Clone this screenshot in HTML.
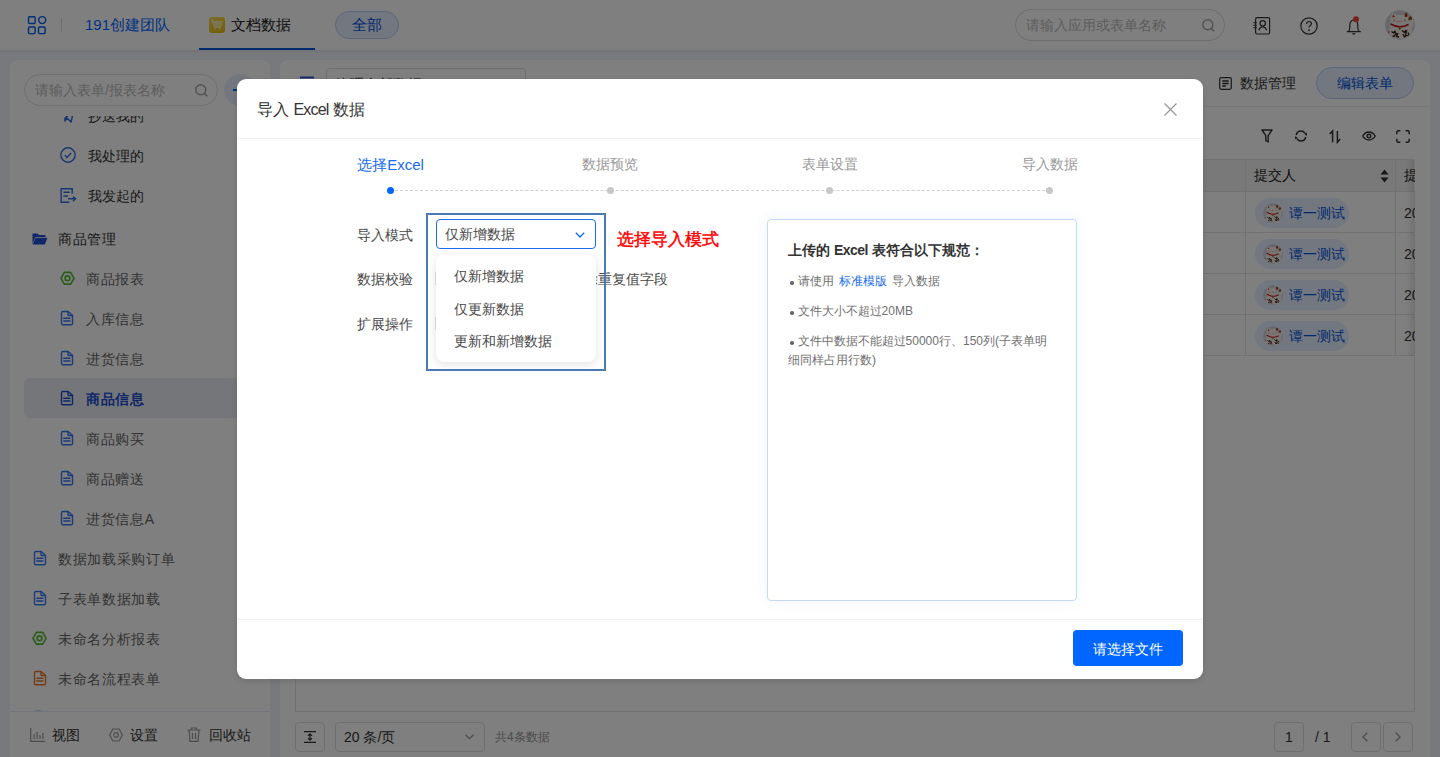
<!DOCTYPE html>
<html><head><meta charset="utf-8">
<style>
*{box-sizing:border-box;margin:0;padding:0}
html,body{width:1440px;height:757px;overflow:hidden}
body{position:relative;background:#eef2f8;font-family:"Liberation Sans",sans-serif;color:#333;font-size:14px}
.a{position:absolute}
.t{position:absolute;white-space:nowrap;line-height:20px;height:20px}
svg{position:absolute;overflow:visible}
#hdr{left:0;top:0;width:1440px;height:50px;background:#fff;box-shadow:0 1px 3px rgba(0,0,0,.06);z-index:1}
#side{left:10px;top:60px;width:260px;height:697px;background:#fff;border-radius:8px 8px 0 0;overflow:hidden}
#cont{left:280px;top:60px;width:1150px;height:697px;background:#fff;border-radius:8px 8px 0 0;overflow:hidden}
#mask{left:0;top:0;width:1440px;height:757px;background:rgba(0,0,0,.5);z-index:5}
#modal{left:237px;top:79px;width:966px;height:600px;background:#fff;border-radius:9px;overflow:hidden;z-index:6;box-shadow:0 2px 6px rgba(0,0,0,.12)}
</style></head><body>

<!-- HEADER -->
<div id="hdr" class="a">
  <svg style="left:27px;top:15px" width="20" height="20" viewBox="0 0 20 20">
    <rect x="1.5" y="1.8" width="6.6" height="6.6" rx="1" fill="none" stroke="#0060f0" stroke-width="1.45"/>
    <circle cx="15.2" cy="5.1" r="3.5" fill="none" stroke="#0060f0" stroke-width="1.45"/>
    <rect x="1.5" y="12" width="6.6" height="6.6" rx="1" fill="none" stroke="#0060f0" stroke-width="1.45"/>
    <rect x="11.5" y="12" width="6.6" height="6.6" rx="1" fill="none" stroke="#0060f0" stroke-width="1.45"/>
  </svg>
  <div class="a" style="left:61px;top:18px;width:1px;height:14px;background:#ddd"></div>
  <div class="t" style="left:85px;top:15px;font-size:15px;color:#0066ff">191创建团队</div>
  <div class="a" style="left:209px;top:17px;width:16px;height:16px;border-radius:3px;background:linear-gradient(160deg,#f2da50,#e8bc08)"><svg style="left:0;top:0" width="16" height="16" viewBox="0 0 16 16"><path d="M2.6 2.6h1.6l.9 1.9h8.1l-1.6 6H5.6z" fill="rgba(255,255,255,.55)" stroke="rgba(255,255,255,.55)" stroke-width="1" stroke-linejoin="round"/><path d="M6.5 10.5l-.8 2.3M10.6 10.5l.6 2.3" stroke="rgba(255,255,255,.55)" stroke-width="1.5"/></svg></div>
  <div class="t" style="left:231px;top:15px;font-size:15px;color:#222">文档数据</div>
  <div class="a" style="left:199px;top:48px;width:116px;height:2px;background:#0055dd"></div>
  <div class="a" style="left:335px;top:11px;width:64px;height:28px;border-radius:14px;background:#e6eeff;border:1px solid #b9cdf5"></div>
  <div class="t" style="left:352px;top:15px;font-size:15px;color:#0055dd">全部</div>

  <div class="a" style="left:1015px;top:9px;width:210px;height:32px;border-radius:16px;border:1px solid #ddd"></div>
  <div class="t" style="left:1026px;top:15px;font-size:14px;color:#bbb">请输入应用或表单名称</div>
  <svg style="left:1202px;top:19px" width="13" height="13" viewBox="0 0 13 13"><circle cx="5.8" cy="5.8" r="5" fill="none" stroke="#a6a6a6" stroke-width="1.5"/><path d="M9.4 9.4l2.8 2.8" stroke="#a6a6a6" stroke-width="1.6"/></svg>

  <svg style="left:1253px;top:17px" width="18" height="18" viewBox="0 0 18 18"><rect x="2.6" y="0.7" width="14" height="16.3" rx="1.4" fill="none" stroke="#333" stroke-width="1.2"/><path d="M0.2 5.7h3.6M0.2 8.2h3.6M0.2 10.8h3.6" stroke="#333" stroke-width="1.1"/><circle cx="9.7" cy="6.3" r="2.7" fill="none" stroke="#333" stroke-width="1.2"/><path d="M5.9 13.3c.5-2.3 2-3.5 3.8-3.5s3.3 1.2 3.8 3.5" fill="none" stroke="#333" stroke-width="1.2"/></svg>
  <svg style="left:1300px;top:17px" width="18" height="18" viewBox="0 0 18 18"><circle cx="9" cy="9" r="8.2" fill="none" stroke="#333" stroke-width="1.2"/><path d="M6.6 7c0-1.5 1-2.5 2.4-2.5s2.4 1 2.4 2.2c0 1.8-2.4 1.9-2.4 3.8" fill="none" stroke="#333" stroke-width="1.2"/><circle cx="9" cy="13.2" r="0.9" fill="#333"/></svg>
  <svg style="left:1346px;top:17px" width="16" height="18" viewBox="0 0 16 18"><path d="M0.8 14.6h14M2.3 14.6c1-1 1.5-2.4 1.5-4V7.8c0-2.7 1.9-4.9 4-4.9s4 2.2 4 4.9v2.8c0 1.6.5 3 1.5 4" fill="none" stroke="#333" stroke-width="1.2"/><path d="M6.3 16.8h3" stroke="#333" stroke-width="1.2"/><circle cx="10" cy="2.3" r="3" fill="#e8462c"/></svg>
  <div class="a" style="left:1385px;top:10px;width:30px;height:30px;border-radius:50%;overflow:hidden"><svg class="cat" width="30" height="30" viewBox="0 0 30 30" style="position:static;display:block">
  <circle cx="15" cy="15" r="15" fill="#cdd1d8"/>
  <path d="M6 6.5L7.5 2.5 11 5h7l3.5-3 1.3 4.5c1 1.5 1.3 3.5.7 5.5l1-.5V8l2-1.5 1.8 1.2v8l-1.5 2.5c.8 2.5.5 7-1 10.5H5.5C4 25 3.5 21 4.8 17.5L6.3 14C5 12 5 9 6 6.5z" fill="#f3efe9"/>
  <path d="M8 4.5l1.8 2.3-2.5.8z" fill="#e01010"/>
  <path d="M19.5 3.5l2.5-1 .8 4-3 .5z" fill="#8a5522"/>
  <path d="M20.6 4.3l1.4.8-.3 2-1.6-.6z" fill="#e01010"/>
  <path d="M23.5 7.5l2-1.2 1.5 1v2.5l-3.5.5z" fill="#8a5522"/>
  <path d="M9 9.5l.2 2M20 9.5l-.2 2" stroke="#d33" stroke-width=".8"/>
  <path d="M11.5 11.5h6" stroke="#d33" stroke-width=".7" stroke-dasharray="1 1"/>
  <path d="M5.8 14Q14.5 19.5 23.5 14.5" fill="none" stroke="#c8141a" stroke-width="1.7"/>
  <rect x="13.8" y="17.5" width="1.8" height="2.2" fill="#9a6a1c"/>
  <path d="M6.5 21.5l2 1.5 1.5-1.5 1 2.5-2.5 2.5M9 21l3 4M13 23l-1.5 3.5 2.5.5M17 20.5l2.5 2 2-1.5-1 4 3 1M18 24l1.5 3 2-2M20.5 20l-.5 2.5M23 22.5l1 2.5M7.5 26l2 1" fill="none" stroke="#3a1a10" stroke-width="1.3"/>
  <circle cx="4" cy="22" r=".8" fill="#d22"/>
</svg></div>
</div>

<!-- SIDEBAR -->
<div id="side" class="a">
  <div class="a" style="left:14px;top:14px;width:194px;height:32px;border-radius:16px;border:1px solid #ddd"></div>
  <div class="t" style="left:25px;top:20px;color:#bbb">请输入表单/报表名称</div>
  <svg style="left:185px;top:24px" width="13" height="13" viewBox="0 0 13 13"><circle cx="5.8" cy="5.8" r="5" fill="none" stroke="#a6a6a6" stroke-width="1.5"/><path d="M9.4 9.4l2.8 2.8" stroke="#a6a6a6" stroke-width="1.6"/></svg>
  <div class="a" style="left:214px;top:14px;width:32px;height:32px;border-radius:16px;background:#e8effd"></div>
  <div class="a" style="left:223px;top:29px;width:14px;height:1.6px;background:#0066ff"></div>
  <div class="a" style="left:229.2px;top:23px;width:1.6px;height:14px;background:#0066ff"></div>
  <div class="a" id="list" style="left:0;top:56px;width:260px;height:595px;overflow:hidden">
<svg style="left:50px;top:-7px" width="16" height="14" viewBox="0 0 16 14"><path d="M1 6l13-5-3 12-4-4-2 3V9l6-5" fill="none" stroke="#2f6de1" stroke-width="1.5" stroke-linejoin="round"/></svg>
<div class="t" style="left:78px;top:-10px;color:#333;">抄送我的</div>
<svg style="left:50px;top:31px" width="16" height="16" viewBox="0 0 16 16"><circle cx="8" cy="8" r="7.2" fill="none" stroke="#2f6de1" stroke-width="1.4"/><path d="M4.8 8.2l2.2 2.2 4.2-4.4" fill="none" stroke="#2f6de1" stroke-width="1.4"/></svg>
<div class="t" style="left:78px;top:30px;color:#333;">我处理的</div>
<svg style="left:50px;top:72px" width="17" height="15" viewBox="0 0 17 15"><path d="M12.2 5.8V0.7H1.1v13.6h8.3" fill="none" stroke="#2f6de1" stroke-width="1.4"/><path d="M3.4 4.2h6.4M3.4 8h4.6M8.2 10.8h7.3M13 8.4l2.6 2.4-2.6 2.4" fill="none" stroke="#2f6de1" stroke-width="1.4"/></svg>
<div class="t" style="left:78px;top:70px;color:#333;">我发起的</div>
<svg style="left:22px;top:117px" width="16" height="12" viewBox="0 0 16 12"><path d="M0.5 1c0-.3.2-.5.5-.5h4.5l1.5 1.5h6c.3 0 .5.2.5.5V4H3.5L0.5 11z" fill="#1f4fd0"/><path d="M3.7 4.8H15.5l-2.7 6.7H.7z" fill="#1f4fd0"/></svg>
<div class="t" style="left:48px;top:113px;color:#333;letter-spacing:0.7px;">商品管理</div>
<svg style="left:50px;top:155px" width="16" height="15" viewBox="0 0 16 15"><path d="M4.3 1.4h6.4l3.3 5.9-3.3 5.9H4.3L1 7.3z" fill="none" stroke="#58b83c" stroke-width="1.7" stroke-linejoin="round"/><circle cx="7.5" cy="7.3" r="2.4" fill="none" stroke="#58b83c" stroke-width="1.7"/></svg>
<div class="t" style="left:76px;top:153px;color:#666;letter-spacing:0.7px;">商品报表</div>
<svg style="left:50px;top:195px" width="14" height="15" viewBox="0 0 14 15"><path d="M1.5 1.8c0-.8.5-1.3 1.3-1.3h5.3l4.4 3.8v8.1c0 .8-.5 1.3-1.3 1.3H2.8c-.8 0-1.3-.5-1.3-1.3z" fill="none" stroke="#3478f6" stroke-width="1.4" stroke-linejoin="round"/><path d="M8 .8v2.9c0 .5.3.8.8.8h3.6" fill="none" stroke="#3478f6" stroke-width="1.4"/><path d="M3.3 7.3h7.1M3.3 10h7.1" stroke="#3478f6" stroke-width="1.4"/></svg>
<div class="t" style="left:76px;top:193px;color:#666;letter-spacing:0.7px;">入库信息</div>
<svg style="left:50px;top:235px" width="14" height="15" viewBox="0 0 14 15"><path d="M1.5 1.8c0-.8.5-1.3 1.3-1.3h5.3l4.4 3.8v8.1c0 .8-.5 1.3-1.3 1.3H2.8c-.8 0-1.3-.5-1.3-1.3z" fill="none" stroke="#3478f6" stroke-width="1.4" stroke-linejoin="round"/><path d="M8 .8v2.9c0 .5.3.8.8.8h3.6" fill="none" stroke="#3478f6" stroke-width="1.4"/><path d="M3.3 7.3h7.1M3.3 10h7.1" stroke="#3478f6" stroke-width="1.4"/></svg>
<div class="t" style="left:76px;top:233px;color:#666;letter-spacing:0.7px;">进货信息</div>
<div class="a" style="left:14px;top:262px;width:232px;height:40px;border-radius:6px;background:#eaedf3"></div>
<svg style="left:50px;top:275px" width="14" height="15" viewBox="0 0 14 15"><path d="M1.5 1.8c0-.8.5-1.3 1.3-1.3h5.3l4.4 3.8v8.1c0 .8-.5 1.3-1.3 1.3H2.8c-.8 0-1.3-.5-1.3-1.3z" fill="none" stroke="#1f4fd0" stroke-width="1.4" stroke-linejoin="round"/><path d="M8 .8v2.9c0 .5.3.8.8.8h3.6" fill="none" stroke="#1f4fd0" stroke-width="1.4"/><path d="M3.3 7.3h7.1M3.3 10h7.1" stroke="#1f4fd0" stroke-width="1.4"/></svg>
<div class="t" style="left:76px;top:273px;color:#1f4fd0;letter-spacing:0.7px;font-weight:bold">商品信息</div>
<svg style="left:50px;top:315px" width="14" height="15" viewBox="0 0 14 15"><path d="M1.5 1.8c0-.8.5-1.3 1.3-1.3h5.3l4.4 3.8v8.1c0 .8-.5 1.3-1.3 1.3H2.8c-.8 0-1.3-.5-1.3-1.3z" fill="none" stroke="#3478f6" stroke-width="1.4" stroke-linejoin="round"/><path d="M8 .8v2.9c0 .5.3.8.8.8h3.6" fill="none" stroke="#3478f6" stroke-width="1.4"/><path d="M3.3 7.3h7.1M3.3 10h7.1" stroke="#3478f6" stroke-width="1.4"/></svg>
<div class="t" style="left:76px;top:313px;color:#666;letter-spacing:0.7px;">商品购买</div>
<svg style="left:50px;top:355px" width="14" height="15" viewBox="0 0 14 15"><path d="M1.5 1.8c0-.8.5-1.3 1.3-1.3h5.3l4.4 3.8v8.1c0 .8-.5 1.3-1.3 1.3H2.8c-.8 0-1.3-.5-1.3-1.3z" fill="none" stroke="#3478f6" stroke-width="1.4" stroke-linejoin="round"/><path d="M8 .8v2.9c0 .5.3.8.8.8h3.6" fill="none" stroke="#3478f6" stroke-width="1.4"/><path d="M3.3 7.3h7.1M3.3 10h7.1" stroke="#3478f6" stroke-width="1.4"/></svg>
<div class="t" style="left:76px;top:353px;color:#666;letter-spacing:0.7px;">商品赠送</div>
<svg style="left:50px;top:395px" width="14" height="15" viewBox="0 0 14 15"><path d="M1.5 1.8c0-.8.5-1.3 1.3-1.3h5.3l4.4 3.8v8.1c0 .8-.5 1.3-1.3 1.3H2.8c-.8 0-1.3-.5-1.3-1.3z" fill="none" stroke="#3478f6" stroke-width="1.4" stroke-linejoin="round"/><path d="M8 .8v2.9c0 .5.3.8.8.8h3.6" fill="none" stroke="#3478f6" stroke-width="1.4"/><path d="M3.3 7.3h7.1M3.3 10h7.1" stroke="#3478f6" stroke-width="1.4"/></svg>
<div class="t" style="left:76px;top:393px;color:#666;letter-spacing:0.7px;">进货信息A</div>
<svg style="left:23px;top:435px" width="14" height="15" viewBox="0 0 14 15"><path d="M1.5 1.8c0-.8.5-1.3 1.3-1.3h5.3l4.4 3.8v8.1c0 .8-.5 1.3-1.3 1.3H2.8c-.8 0-1.3-.5-1.3-1.3z" fill="none" stroke="#3478f6" stroke-width="1.4" stroke-linejoin="round"/><path d="M8 .8v2.9c0 .5.3.8.8.8h3.6" fill="none" stroke="#3478f6" stroke-width="1.4"/><path d="M3.3 7.3h7.1M3.3 10h7.1" stroke="#3478f6" stroke-width="1.4"/></svg>
<div class="t" style="left:48px;top:433px;color:#666;letter-spacing:0.7px;">数据加载采购订单</div>
<svg style="left:23px;top:475px" width="14" height="15" viewBox="0 0 14 15"><path d="M1.5 1.8c0-.8.5-1.3 1.3-1.3h5.3l4.4 3.8v8.1c0 .8-.5 1.3-1.3 1.3H2.8c-.8 0-1.3-.5-1.3-1.3z" fill="none" stroke="#3478f6" stroke-width="1.4" stroke-linejoin="round"/><path d="M8 .8v2.9c0 .5.3.8.8.8h3.6" fill="none" stroke="#3478f6" stroke-width="1.4"/><path d="M3.3 7.3h7.1M3.3 10h7.1" stroke="#3478f6" stroke-width="1.4"/></svg>
<div class="t" style="left:48px;top:473px;color:#666;letter-spacing:0.7px;">子表单数据加载</div>
<svg style="left:22px;top:515px" width="16" height="15" viewBox="0 0 16 15"><path d="M4.3 1.4h6.4l3.3 5.9-3.3 5.9H4.3L1 7.3z" fill="none" stroke="#58b83c" stroke-width="1.7" stroke-linejoin="round"/><circle cx="7.5" cy="7.3" r="2.4" fill="none" stroke="#58b83c" stroke-width="1.7"/></svg>
<div class="t" style="left:48px;top:513px;color:#666;letter-spacing:0.7px;">未命名分析报表</div>
<svg style="left:23px;top:555px" width="14" height="15" viewBox="0 0 14 15"><path d="M1.5 1.8c0-.8.5-1.3 1.3-1.3h5.3l4.4 3.8v8.1c0 .8-.5 1.3-1.3 1.3H2.8c-.8 0-1.3-.5-1.3-1.3z" fill="none" stroke="#e8792b" stroke-width="1.4" stroke-linejoin="round"/><path d="M8 .8v2.9c0 .5.3.8.8.8h3.6" fill="none" stroke="#e8792b" stroke-width="1.4"/><path d="M3.3 7.3h7.1M3.3 10h7.1" stroke="#e8792b" stroke-width="1.4"/></svg>
<div class="t" style="left:48px;top:553px;color:#666;letter-spacing:0.7px;">未命名流程表单</div>
<svg style="left:23px;top:595px" width="14" height="15" viewBox="0 0 14 15"><path d="M1.5 1.8c0-.8.5-1.3 1.3-1.3h5.3l4.4 3.8v8.1c0 .8-.5 1.3-1.3 1.3H2.8c-.8 0-1.3-.5-1.3-1.3z" fill="none" stroke="#3478f6" stroke-width="1.4" stroke-linejoin="round"/><path d="M8 .8v2.9c0 .5.3.8.8.8h3.6" fill="none" stroke="#3478f6" stroke-width="1.4"/><path d="M3.3 7.3h7.1M3.3 10h7.1" stroke="#3478f6" stroke-width="1.4"/></svg>
<div class="t" style="left:48px;top:593px;color:#666;letter-spacing:0.7px;">未命名表单</div>
  </div>
  <div class="a" style="left:0;top:651px;width:260px;height:46px;border-top:1px solid #e3e9f3;background:#fff">
  <svg style="left:20px;top:16px" width="15" height="14" viewBox="0 0 15 14"><path d="M0.7 0v13.3H15M4 6v5M7 4v7M10 7v4M13 5v6" fill="none" stroke="#999" stroke-width="1.2"/></svg>
  <div class="t" style="left:42px;top:13px;color:#333">视图</div>
  <svg style="left:99px;top:16px" width="14" height="14" viewBox="0 0 14 14"><path d="M3.8 1h6.4L13.3 7l-3.1 6H3.8L.7 7z" fill="none" stroke="#999" stroke-width="1.2" stroke-linejoin="round"/><circle cx="7" cy="7" r="2.3" fill="none" stroke="#999" stroke-width="1.2"/></svg>
  <div class="t" style="left:120px;top:13px;color:#333">设置</div>
  <svg style="left:177px;top:15px" width="14" height="15" viewBox="0 0 14 15"><path d="M0.5 3h13M4.5 3V1h5v2M2 3l1 11.3h8L12 3M5.5 6v6M8.5 6v6" fill="none" stroke="#999" stroke-width="1.2"/></svg>
  <div class="t" style="left:199px;top:13px;color:#333">回收站</div>
  </div>
</div>

<!-- CONTENT -->
<div id="cont" class="a">
<svg style="left:20px;top:16px" width="14" height="14" viewBox="0 0 14 14"><path d="M0 1.5h14M0 7h14M0 12.5h14" stroke="#2f5bd8" stroke-width="2"/></svg>
<div class="a" style="left:46px;top:8px;width:200px;height:32px;border:1px solid #ddd;border-radius:4px"></div>
<div class="t" style="left:55px;top:14px;font-size:14px;letter-spacing:.6px;color:#333">管理全部数据</div>
<svg style="left:939px;top:17px" width="13" height="13" viewBox="0 0 13 13"><rect x="0.7" y="0.7" width="11.6" height="11.6" rx="1.5" fill="none" stroke="#333" stroke-width="1.2"/><path d="M3.3 4h6.4M3.3 6.5h6.4M3.3 9h3.5" stroke="#333" stroke-width="1.3"/></svg>
<div class="t" style="left:960px;top:13px;color:#333">数据管理</div>
<div class="a" style="left:1036px;top:7px;width:98px;height:32px;border-radius:16px;background:#e6eeff;border:1px solid #b9cdf5"></div>
<div class="t" style="left:1057px;top:13px;color:#0055dd">编辑表单</div>
<div class="a" style="left:0;top:46px;width:1150px;height:1px;background:#eee"></div>
<svg style="left:981px;top:69px" width="12" height="14" viewBox="0 0 12 14"><path d="M1 1h10L7.2 6.6v6.4L4.8 11.6V6.6z" fill="none" stroke="#333" stroke-width="1.4" stroke-linejoin="round"/></svg><svg style="left:1014px;top:70px" width="14" height="12" viewBox="0 0 14 12"><path d="M2.2 5C2.8 2.6 4.7 1 7 1c1.6 0 3 .8 3.9 2M11.8 7C11.2 9.4 9.3 11 7 11c-1.6 0-3-.8-3.9-2" fill="none" stroke="#333" stroke-width="1.5"/><path d="M10 3.8l3-1-.2 3.2zM4 8.2l-3 1 .2-3.2z" fill="#333"/></svg><svg style="left:1049px;top:70px" width="12" height="13" viewBox="0 0 12 13"><path d="M3.6 12.2V1L0.8 4M8.4 1v11.2l2.8-3.2" fill="none" stroke="#333" stroke-width="1.5"/></svg><svg style="left:1082px;top:71px" width="14" height="10" viewBox="0 0 14 10"><path d="M0.8 5C2.3 2.4 4.5 1 7 1s4.7 1.4 6.2 4C11.7 7.6 9.5 9 7 9S2.3 7.6.8 5z" fill="none" stroke="#333" stroke-width="1.4"/><circle cx="7" cy="5" r="1.8" fill="none" stroke="#333" stroke-width="1.4"/></svg><svg style="left:1116px;top:70px" width="14" height="13" viewBox="0 0 14 13"><path d="M0.8 4.2V2.2c0-.8.6-1.4 1.4-1.4h2.2M9.6 0.8h2.2c.8 0 1.4.6 1.4 1.4v2M13.2 8.8v2c0 .8-.6 1.4-1.4 1.4H9.6M4.4 12.2H2.2c-.8 0-1.4-.6-1.4-1.4v-2" fill="none" stroke="#333" stroke-width="1.5"/></svg>
<div class="a" style="left:15px;top:99px;width:1120px;height:553px;border:1px solid #e5e5e5"></div>
<div class="a" style="left:16px;top:100px;width:1119px;height:32px;background:#f3f3f3;border-bottom:1px solid #e5e5e5"></div>
<div class="a" style="left:16px;top:172px;width:1119px;height:1px;background:#e5e5e5"></div>
<div class="a" style="left:16px;top:213px;width:1119px;height:1px;background:#e5e5e5"></div>
<div class="a" style="left:16px;top:254px;width:1119px;height:1px;background:#e5e5e5"></div>
<div class="a" style="left:16px;top:295px;width:1119px;height:1px;background:#e5e5e5"></div>
<div class="a" style="left:965px;top:100px;width:1px;height:196px;background:#e5e5e5"></div>
<div class="a" style="left:1115px;top:100px;width:1px;height:196px;background:#e5e5e5"></div>
<div class="t" style="left:974px;top:104.5px;color:#222">提交人</div>
<svg style="left:1100px;top:109px" width="9" height="14" viewBox="0 0 9 14"><path d="M4.5 0.5L8.5 5.5H0.5z M4.5 13.5L0.5 8.5h8z" fill="#333"/></svg>
<div class="t" style="left:1124px;top:104.5px;color:#222">提交时间</div>
<div class="a" style="left:975px;top:138px;width:94px;height:30px;border-radius:15px;background:#e6eeff"></div>
<div class="a" style="left:983px;top:143px;width:20px;height:20px;border-radius:50%;overflow:hidden"><svg class="cat" width="20" height="20" viewBox="0 0 30 30" style="position:static;display:block">
  <circle cx="15" cy="15" r="15" fill="#cdd1d8"/>
  <path d="M6 6.5L7.5 2.5 11 5h7l3.5-3 1.3 4.5c1 1.5 1.3 3.5.7 5.5l1-.5V8l2-1.5 1.8 1.2v8l-1.5 2.5c.8 2.5.5 7-1 10.5H5.5C4 25 3.5 21 4.8 17.5L6.3 14C5 12 5 9 6 6.5z" fill="#f3efe9"/>
  <path d="M8 4.5l1.8 2.3-2.5.8z" fill="#e01010"/>
  <path d="M19.5 3.5l2.5-1 .8 4-3 .5z" fill="#8a5522"/>
  <path d="M20.6 4.3l1.4.8-.3 2-1.6-.6z" fill="#e01010"/>
  <path d="M23.5 7.5l2-1.2 1.5 1v2.5l-3.5.5z" fill="#8a5522"/>
  <path d="M9 9.5l.2 2M20 9.5l-.2 2" stroke="#d33" stroke-width=".8"/>
  <path d="M11.5 11.5h6" stroke="#d33" stroke-width=".7" stroke-dasharray="1 1"/>
  <path d="M5.8 14Q14.5 19.5 23.5 14.5" fill="none" stroke="#c8141a" stroke-width="1.7"/>
  <rect x="13.8" y="17.5" width="1.8" height="2.2" fill="#9a6a1c"/>
  <path d="M6.5 21.5l2 1.5 1.5-1.5 1 2.5-2.5 2.5M9 21l3 4M13 23l-1.5 3.5 2.5.5M17 20.5l2.5 2 2-1.5-1 4 3 1M18 24l1.5 3 2-2M20.5 20l-.5 2.5M23 22.5l1 2.5M7.5 26l2 1" fill="none" stroke="#3a1a10" stroke-width="1.3"/>
  <circle cx="4" cy="22" r=".8" fill="#d22"/>
</svg></div>
<div class="t" style="left:1009px;top:143px;color:#0055dd">谭一测试</div>
<div class="t" style="left:1124px;top:143px;color:#333">2023-</div>
<div class="a" style="left:975px;top:179px;width:94px;height:30px;border-radius:15px;background:#e6eeff"></div>
<div class="a" style="left:983px;top:184px;width:20px;height:20px;border-radius:50%;overflow:hidden"><svg class="cat" width="20" height="20" viewBox="0 0 30 30" style="position:static;display:block">
  <circle cx="15" cy="15" r="15" fill="#cdd1d8"/>
  <path d="M6 6.5L7.5 2.5 11 5h7l3.5-3 1.3 4.5c1 1.5 1.3 3.5.7 5.5l1-.5V8l2-1.5 1.8 1.2v8l-1.5 2.5c.8 2.5.5 7-1 10.5H5.5C4 25 3.5 21 4.8 17.5L6.3 14C5 12 5 9 6 6.5z" fill="#f3efe9"/>
  <path d="M8 4.5l1.8 2.3-2.5.8z" fill="#e01010"/>
  <path d="M19.5 3.5l2.5-1 .8 4-3 .5z" fill="#8a5522"/>
  <path d="M20.6 4.3l1.4.8-.3 2-1.6-.6z" fill="#e01010"/>
  <path d="M23.5 7.5l2-1.2 1.5 1v2.5l-3.5.5z" fill="#8a5522"/>
  <path d="M9 9.5l.2 2M20 9.5l-.2 2" stroke="#d33" stroke-width=".8"/>
  <path d="M11.5 11.5h6" stroke="#d33" stroke-width=".7" stroke-dasharray="1 1"/>
  <path d="M5.8 14Q14.5 19.5 23.5 14.5" fill="none" stroke="#c8141a" stroke-width="1.7"/>
  <rect x="13.8" y="17.5" width="1.8" height="2.2" fill="#9a6a1c"/>
  <path d="M6.5 21.5l2 1.5 1.5-1.5 1 2.5-2.5 2.5M9 21l3 4M13 23l-1.5 3.5 2.5.5M17 20.5l2.5 2 2-1.5-1 4 3 1M18 24l1.5 3 2-2M20.5 20l-.5 2.5M23 22.5l1 2.5M7.5 26l2 1" fill="none" stroke="#3a1a10" stroke-width="1.3"/>
  <circle cx="4" cy="22" r=".8" fill="#d22"/>
</svg></div>
<div class="t" style="left:1009px;top:184px;color:#0055dd">谭一测试</div>
<div class="t" style="left:1124px;top:184px;color:#333">2023-</div>
<div class="a" style="left:975px;top:220px;width:94px;height:30px;border-radius:15px;background:#e6eeff"></div>
<div class="a" style="left:983px;top:225px;width:20px;height:20px;border-radius:50%;overflow:hidden"><svg class="cat" width="20" height="20" viewBox="0 0 30 30" style="position:static;display:block">
  <circle cx="15" cy="15" r="15" fill="#cdd1d8"/>
  <path d="M6 6.5L7.5 2.5 11 5h7l3.5-3 1.3 4.5c1 1.5 1.3 3.5.7 5.5l1-.5V8l2-1.5 1.8 1.2v8l-1.5 2.5c.8 2.5.5 7-1 10.5H5.5C4 25 3.5 21 4.8 17.5L6.3 14C5 12 5 9 6 6.5z" fill="#f3efe9"/>
  <path d="M8 4.5l1.8 2.3-2.5.8z" fill="#e01010"/>
  <path d="M19.5 3.5l2.5-1 .8 4-3 .5z" fill="#8a5522"/>
  <path d="M20.6 4.3l1.4.8-.3 2-1.6-.6z" fill="#e01010"/>
  <path d="M23.5 7.5l2-1.2 1.5 1v2.5l-3.5.5z" fill="#8a5522"/>
  <path d="M9 9.5l.2 2M20 9.5l-.2 2" stroke="#d33" stroke-width=".8"/>
  <path d="M11.5 11.5h6" stroke="#d33" stroke-width=".7" stroke-dasharray="1 1"/>
  <path d="M5.8 14Q14.5 19.5 23.5 14.5" fill="none" stroke="#c8141a" stroke-width="1.7"/>
  <rect x="13.8" y="17.5" width="1.8" height="2.2" fill="#9a6a1c"/>
  <path d="M6.5 21.5l2 1.5 1.5-1.5 1 2.5-2.5 2.5M9 21l3 4M13 23l-1.5 3.5 2.5.5M17 20.5l2.5 2 2-1.5-1 4 3 1M18 24l1.5 3 2-2M20.5 20l-.5 2.5M23 22.5l1 2.5M7.5 26l2 1" fill="none" stroke="#3a1a10" stroke-width="1.3"/>
  <circle cx="4" cy="22" r=".8" fill="#d22"/>
</svg></div>
<div class="t" style="left:1009px;top:225px;color:#0055dd">谭一测试</div>
<div class="t" style="left:1124px;top:225px;color:#333">2023-</div>
<div class="a" style="left:975px;top:261px;width:94px;height:30px;border-radius:15px;background:#e6eeff"></div>
<div class="a" style="left:983px;top:266px;width:20px;height:20px;border-radius:50%;overflow:hidden"><svg class="cat" width="20" height="20" viewBox="0 0 30 30" style="position:static;display:block">
  <circle cx="15" cy="15" r="15" fill="#cdd1d8"/>
  <path d="M6 6.5L7.5 2.5 11 5h7l3.5-3 1.3 4.5c1 1.5 1.3 3.5.7 5.5l1-.5V8l2-1.5 1.8 1.2v8l-1.5 2.5c.8 2.5.5 7-1 10.5H5.5C4 25 3.5 21 4.8 17.5L6.3 14C5 12 5 9 6 6.5z" fill="#f3efe9"/>
  <path d="M8 4.5l1.8 2.3-2.5.8z" fill="#e01010"/>
  <path d="M19.5 3.5l2.5-1 .8 4-3 .5z" fill="#8a5522"/>
  <path d="M20.6 4.3l1.4.8-.3 2-1.6-.6z" fill="#e01010"/>
  <path d="M23.5 7.5l2-1.2 1.5 1v2.5l-3.5.5z" fill="#8a5522"/>
  <path d="M9 9.5l.2 2M20 9.5l-.2 2" stroke="#d33" stroke-width=".8"/>
  <path d="M11.5 11.5h6" stroke="#d33" stroke-width=".7" stroke-dasharray="1 1"/>
  <path d="M5.8 14Q14.5 19.5 23.5 14.5" fill="none" stroke="#c8141a" stroke-width="1.7"/>
  <rect x="13.8" y="17.5" width="1.8" height="2.2" fill="#9a6a1c"/>
  <path d="M6.5 21.5l2 1.5 1.5-1.5 1 2.5-2.5 2.5M9 21l3 4M13 23l-1.5 3.5 2.5.5M17 20.5l2.5 2 2-1.5-1 4 3 1M18 24l1.5 3 2-2M20.5 20l-.5 2.5M23 22.5l1 2.5M7.5 26l2 1" fill="none" stroke="#3a1a10" stroke-width="1.3"/>
  <circle cx="4" cy="22" r=".8" fill="#d22"/>
</svg></div>
<div class="t" style="left:1009px;top:266px;color:#0055dd">谭一测试</div>
<div class="t" style="left:1124px;top:266px;color:#333">2023-</div>
<div class="a" style="left:1126px;top:100px;width:8px;height:196px;background:linear-gradient(to right,rgba(0,0,0,0),rgba(0,0,0,.1))"></div>
<div class="a" style="left:1135px;top:47px;width:15px;height:650px;background:#fff"></div>
<div class="a" style="left:15px;top:662px;width:30px;height:30px;border:1px solid #ddd;border-radius:4px"></div>
<svg style="left:24px;top:671px" width="12" height="12" viewBox="0 0 12 12"><path d="M0 0.7h12M0 11.3h12" stroke="#333" stroke-width="1.3"/><path d="M6 3v6M4 4.8L6 2.8l2 2M4 7.2l2 2 2-2" fill="none" stroke="#333" stroke-width="1.2"/></svg>
<div class="a" style="left:55px;top:662px;width:150px;height:30px;border:1px solid #ddd;border-radius:4px"></div>
<div class="t" style="left:64px;top:667px;font-size:14px;color:#333">20 条/页</div>
<svg style="left:185px;top:674px" width="9" height="6" viewBox="0 0 9 6"><path d="M0.5 0.7L4.5 4.7l4-4" fill="none" stroke="#999" stroke-width="1.3"/></svg>
<div class="t" style="left:215px;top:667px;font-size:12px;color:#999">共4条数据</div>
<div class="a" style="left:994px;top:662px;width:30px;height:30px;border:1px solid #ddd;border-radius:4px"></div>
<div class="t" style="left:1005px;top:667px;color:#333">1</div>
<div class="t" style="left:1035px;top:667px;color:#333">/ 1</div>
<div class="a" style="left:1071px;top:662px;width:30px;height:30px;border:1px solid #ddd;border-radius:4px"></div>
<svg style="left:1082px;top:672px" width="6" height="10" viewBox="0 0 6 10"><path d="M5.3 0.7L1 5l4.3 4.3" fill="none" stroke="#999" stroke-width="1.3"/></svg>
<div class="a" style="left:1103px;top:662px;width:30px;height:30px;border:1px solid #ddd;border-radius:4px"></div>
<svg style="left:1115px;top:672px" width="6" height="10" viewBox="0 0 6 10"><path d="M0.7 0.7L5 5 .7 9.3" fill="none" stroke="#999" stroke-width="1.3"/></svg>
</div>

<div id="mask" class="a"></div>

<!-- MODAL -->
<div id="modal" class="a">
  <div class="t" style="left:20px;top:20px;font-size:16px;line-height:22px;height:22px;color:#333">导入 <span style="letter-spacing:-.8px">Excel</span> 数据</div>
  <svg style="left:927px;top:24px" width="13" height="13" viewBox="0 0 13 13"><path d="M0.5 0.5l12 12M12.5 0.5l-12 12" stroke="#999" stroke-width="1.3"/></svg>
  <div class="a" style="left:0;top:59px;width:966px;height:1px;background:#eee"></div>
<div class="a" style="left:153px;top:111px;width:660px;height:0;border-top:1px dashed #cfcfcf"></div>
<div class="t" style="left:73.5px;width:160px;text-align:center;top:76px;font-size:15px;color:#1a6cf0">选择Excel</div>
<div class="a" style="left:150.0px;top:108px;width:7px;height:7px;border-radius:50%;background:#0066ff"></div>
<div class="t" style="left:293px;width:160px;text-align:center;top:75px;font-size:14px;color:#999">数据预览</div>
<div class="a" style="left:369.5px;top:108px;width:7px;height:7px;border-radius:50%;background:#c8c8c8"></div>
<div class="t" style="left:512.5px;width:160px;text-align:center;top:75px;font-size:14px;color:#999">表单设置</div>
<div class="a" style="left:589.0px;top:108px;width:7px;height:7px;border-radius:50%;background:#c8c8c8"></div>
<div class="t" style="left:732.5px;width:160px;text-align:center;top:75px;font-size:14px;color:#999">导入数据</div>
<div class="a" style="left:809.0px;top:108px;width:7px;height:7px;border-radius:50%;background:#c8c8c8"></div>
<div class="t" style="left:120px;top:145.5px;color:#484848">导入模式</div>
<div class="t" style="left:120px;top:190px;color:#484848">数据校验</div>
<div class="t" style="left:120px;top:235px;color:#484848">扩展操作</div>
<div class="a" style="left:198px;top:193px;width:1px;height:13px;background:#e2e2e2"></div>
<div class="a" style="left:198px;top:238px;width:1px;height:13px;background:#e2e2e2"></div>
<div class="t" style="left:347px;top:190px;color:#484848">除重复值字段</div>
<div class="a" style="left:199px;top:140px;width:160px;height:30px;border:1px solid #1a6cf0;border-radius:4px;background:#fff"></div>
<div class="t" style="left:208px;top:145px;color:#484848">仅新增数据</div>
<svg style="left:338px;top:153px" width="10" height="6" viewBox="0 0 10 6"><path d="M0.8 0.8L5 5l4.2-4.2" fill="none" stroke="#1a6cf0" stroke-width="1.4"/></svg>
<div class="a" style="left:199px;top:176px;width:160px;height:107px;border-radius:8px;background:#fff;box-shadow:0 2px 10px rgba(0,0,0,.12)"></div>
<div class="t" style="left:217px;top:186.5px;color:#484848">仅新增数据</div>
<div class="t" style="left:217px;top:219.5px;color:#484848">仅更新数据</div>
<div class="t" style="left:217px;top:252px;color:#484848">更新和新增数据</div>
<div class="a" style="left:189px;top:134px;width:180px;height:158px;border:2px solid #4a7ab5"></div>
<div class="t" style="left:380px;top:151px;font-size:17px;font-weight:normal;-webkit-text-stroke:.45px #ff0000;color:#ff0000">选择导入模式</div>
<div class="a" style="left:530px;top:140px;width:310px;height:382px;border:1px solid #c2d9fb;border-radius:4px;box-shadow:0 0 16px rgba(40,110,240,.07)"></div>
<div class="t" style="left:551px;top:161px;font-weight:bold;color:#333">上传的 <span style="letter-spacing:-.5px">Excel</span> 表符合以下规范：</div>
<div class="t" style="left:551px;top:192px;font-size:12px;color:#707070"><span style="display:inline-block;width:3.6px;height:3.6px;border-radius:50%;background:#666;vertical-align:middle;position:relative;top:1px;margin:0 4px 0 2px"></span>请使用 <span style="color:#1a6cf0;margin:0 2px">标准模版</span> 导入数据</div>
<div class="t" style="left:551px;top:222px;font-size:12px;color:#707070"><span style="display:inline-block;width:3.6px;height:3.6px;border-radius:50%;background:#666;vertical-align:middle;position:relative;top:1px;margin:0 4px 0 2px"></span>文件大小不超过20MB</div>
<div class="t" style="left:551px;top:252px;font-size:12px;color:#707070"><span style="display:inline-block;width:3.6px;height:3.6px;border-radius:50%;background:#666;vertical-align:middle;position:relative;top:1px;margin:0 4px 0 2px"></span>文件中数据不能超过50000行、150列(子表单明</div>
<div class="t" style="left:551px;top:271px;font-size:12px;color:#707070">细同样占用行数)</div>
<div class="a" style="left:0;top:540px;width:966px;height:1px;background:#eee"></div>
<div class="a" style="left:836px;top:551px;width:110px;height:36px;border-radius:4px;background:#0066ff"></div>
<div class="t" style="left:836px;width:110px;text-align:center;top:560px;color:#fff">请选择文件</div>
</div>

</body></html>
